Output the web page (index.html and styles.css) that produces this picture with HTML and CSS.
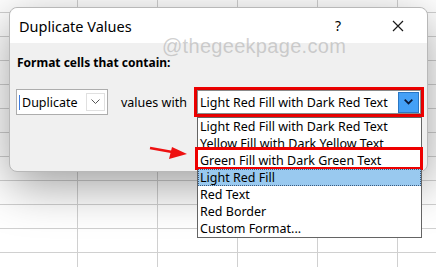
FILE: index.html
```html
<!DOCTYPE html>
<html lang="en">
<head>
  <meta charset="UTF-8">
  <title>Duplicate Values</title>
  <link rel="stylesheet" href="styles.css">
</head>
<body>
  <div class="sheet">
    <div class="dialog">
      <div class="titlebar">
        <span class="title">Duplicate Values</span>
        <span class="help">?</span>
        <svg class="close" width="12" height="12" viewBox="0 0 12 12">
          <path d="M1 1 L11 11 M11 1 L1 11" stroke="#1a1a1a" stroke-width="1.2" fill="none"/>
        </svg>
      </div>
      <div class="content">
        <div class="heading">Format cells that contain:</div>
        <div class="row">
          <div class="combo small">
            <span class="caret"></span>
            <span class="combo-text">Duplicate</span>
            <span class="drop-btn">
              <svg width="9" height="6" viewBox="0 0 9 6"><path d="M0.5 0.5 L4.5 4.5 L8.5 0.5" stroke="#555" fill="none"/></svg>
            </span>
          </div>
          <span class="label">values with</span>
          <div class="picker">
            <div class="combo big">
              <span class="combo-text">Light Red Fill with Dark Red Text</span>
              <span class="drop-btn blue">
                <svg width="9" height="6" viewBox="0 0 9 6"><path d="M0.7 0.7 L4.5 4.5 L8.3 0.7" stroke="#0b1a3a" stroke-width="1.8" fill="none"/></svg>
              </span>
            </div>
            <ul class="list">
              <li>Light Red Fill with Dark Red Text</li>
              <li>Yellow Fill with Dark Yellow Text</li>
              <li class="marked">Green Fill with Dark Green Text</li>
              <li class="selected">Light Red Fill</li>
              <li>Red Text</li>
              <li>Red Border</li>
              <li>Custom Format...</li>
            </ul>
          </div>
        </div>
      </div>
    </div>

    <div class="watermark">@thegeekpage.com</div>
    <svg class="arrow" width="42" height="16" viewBox="0 0 42 16">
      <path d="M1 2 L26 6.5" stroke="#ee1111" stroke-width="2.6" fill="none"/>
      <path d="M23 1 L38 8 L20 13 Z" fill="#ee1111"/>
    </svg>
  </div>
</body>
</html>
```

FILE: styles.css
```css
body {
  margin: 0;
  background: #fff;
  font-family: "Noto Sans", Arial, sans-serif;
  color: #000;
}

/* spreadsheet grid behind the dialog */
.sheet {
  position: relative;
  width: 436px;
  height: 267px;
  overflow: hidden;
  padding: 7px 0 0 9px;
  box-sizing: border-box;
  background-color: #fff;
  background-image:
    linear-gradient(to right, #d0d0d0 1px, transparent 1px),
    linear-gradient(to bottom, #d0d0d0 1px, transparent 1px);
  background-size: 80px 24px;
  background-position: 77px 12px;
}

.dialog {
  width: 419px;
  height: 165px;
  border: 1px solid #b8b8b8;
  border-radius: 8px;
  box-sizing: border-box;
  background: #f0f0f0;
  box-shadow: 0 14px 48px rgba(0, 0, 0, 0.38);
}

.titlebar {
  display: flex;
  align-items: center;
  height: 35px;
  padding: 0 0 0 9px;
  background: #fff;
  border-radius: 8px 8px 0 0;
}

.title {
  font-size: 14.5px;
  flex: 1;
}

.help {
  font-size: 14px;
  width: 14px;
  margin-right: 43px;
}

.close {
  margin-right: 23px;
}

.content {
  padding: 11px 3px 0 7px;
}

.heading {
  font-size: 12px;
  font-weight: bold;
  height: 18px;
}

.row {
  display: flex;
  align-items: center;
  margin-top: 15px;
}

.combo {
  display: flex;
  align-items: center;
  background: #fff;
  box-sizing: border-box;
}

.combo.small {
  flex-shrink: 0;
  width: 92px;
  height: 26px;
  margin-left: -1px;
  border: 1px solid #adadad;
}

.caret {
  width: 1px;
  height: 15px;
  background: #3d7be0;
  margin-left: 2px;
}

.combo-text {
  font-size: 12.5px;
  flex: 1;
  padding-left: 2px;
  white-space: nowrap;
}

.drop-btn {
  display: flex;
  align-items: center;
  justify-content: center;
  width: 19px;
  height: 18px;
  margin-right: 2px;
  border: 1px solid #e0e0e0;
  box-sizing: border-box;
}

.label {
  font-size: 12.5px;
  margin-left: 13px;
  white-space: nowrap;
}

.picker {
  position: relative;
  flex-shrink: 0;
  border: 3px solid #ee0000;
  width: 230px;
  height: 30px;
  box-sizing: border-box;
  margin-left: auto;
}

.combo.big {
  height: 24px;
  border: 1px solid #8a8a8a;
  box-shadow: 0 0 2px rgba(0, 0, 0, 0.25);
}

.drop-btn.blue {
  width: 21px;
  height: 21px;
  margin-right: 1px;
  background: #44a0f6;
  border: 1px solid #2a77c4;
}

/* open dropdown list */
.list {
  position: absolute;
  top: 27px;
  left: 0;
  width: 225px;
  margin: 0;
  padding: 0;
  list-style: none;
  background: #fff;
  border: 1px solid #646464;
  box-sizing: border-box;
  z-index: 2;
}

.list li {
  height: 17px;
  line-height: 17px;
  font-size: 12.5px;
  padding-left: 2px;
  white-space: nowrap;
  position: relative;
}

.list li.selected {
  background: #99c9ef;
  outline: 1px dotted #3a5a80;
  outline-offset: -1px;
}

.list li.marked::after {
  content: "";
  position: absolute;
  left: -3px;
  right: -2px;
  top: -5px;
  bottom: -1px;
  border: 3px solid #ee0000;
}

.watermark {
  position: absolute;
  left: 162px;
  top: 36px;
  line-height: 20px;
  font-family: "Liberation Sans", Arial, sans-serif;
  font-size: 20px;
  color: rgba(170, 170, 170, 0.55);
  letter-spacing: 0.3px;
}

.arrow {
  position: absolute;
  left: 149px;
  top: 146px;
}
```
